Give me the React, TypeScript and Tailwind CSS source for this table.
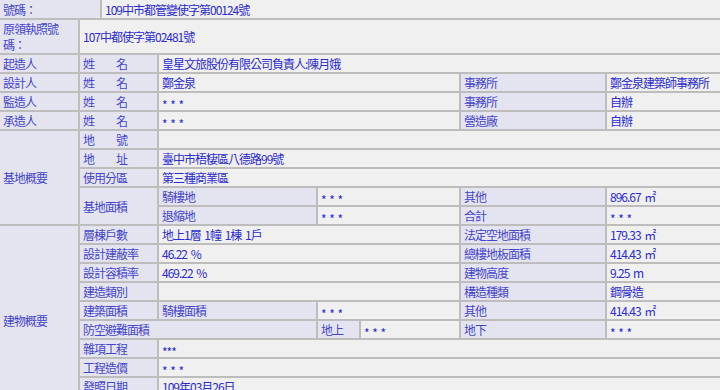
import React from "react";

type CellProps = {
  kind?: "l" | "v";
  className?: string;
  children?: React.ReactNode;
};

// label cells are lavender, value cells are grey
function Cell({ kind = "v", className = "", children }: CellProps) {
  const tone =
    kind === "l"
      ? "bg-[#e4e4f0] text-[#4444cc]"
      : "bg-[#f0f0f0] text-[#2b2bd0]";
  return (
    <div className={`flex items-center px-[3px] whitespace-nowrap ${tone} ${className}`}>
      <div>{children}</div>
    </div>
  );
}

const Stars = () => <span className="relative top-[3px]">* * *</span>;

export default function App() {
  return (
    <div className="w-[720px] h-[390px] overflow-hidden bg-white font-['Noto_Sans_CJK_TC',sans-serif] text-[12px] tracking-[-1px] [word-spacing:2px] leading-[15px]">
      <div className="flex flex-col gap-[2px] bg-[#bdbdbd]">
        {/* 號碼 */}
        <div className="grid grid-cols-[100px_1fr] gap-[2px] h-[18px]">
          <Cell kind="l">號碼：</Cell>
          <Cell>109中市都管變使字第00124號</Cell>
        </div>

        {/* 原領執照號碼 */}
        <div className="grid grid-cols-[78px_1fr] gap-[2px] h-[33px]">
          <Cell kind="l" className="leading-[16px]">
            原領執照號
            <br />
            碼：
          </Cell>
          <Cell>107中都使字第02481號</Cell>
        </div>

        {/* main table */}
        <div className="grid grid-cols-[78px_77px_157px_41px_98px_144px_1fr] auto-rows-[17px] gap-[2px]">
          <Cell kind="l">起造人</Cell>
          <Cell kind="l">姓　　名</Cell>
          <Cell className="col-span-5">皇星文旅股份有限公司負責人:陳月娥</Cell>

          <Cell kind="l">設計人</Cell>
          <Cell kind="l">姓　　名</Cell>
          <Cell className="col-span-3">鄭金泉</Cell>
          <Cell kind="l">事務所</Cell>
          <Cell>鄭金泉建築師事務所</Cell>

          <Cell kind="l">監造人</Cell>
          <Cell kind="l">姓　　名</Cell>
          <Cell className="col-span-3"><Stars /></Cell>
          <Cell kind="l">事務所</Cell>
          <Cell>自辦</Cell>

          <Cell kind="l">承造人</Cell>
          <Cell kind="l">姓　　名</Cell>
          <Cell className="col-span-3"><Stars /></Cell>
          <Cell kind="l">營造廠</Cell>
          <Cell>自辦</Cell>

          {/* 基地概要 */}
          <Cell kind="l" className="row-span-5">基地概要</Cell>
          <Cell kind="l">地　　號</Cell>
          <Cell className="col-span-5" />

          <Cell kind="l">地　　址</Cell>
          <Cell className="col-span-5">臺中市梧棲區八德路99號</Cell>

          <Cell kind="l">使用分區</Cell>
          <Cell className="col-span-5">第三種商業區</Cell>

          <Cell kind="l" className="row-span-2">基地面積</Cell>
          <Cell kind="l">騎樓地</Cell>
          <Cell className="col-span-2"><Stars /></Cell>
          <Cell kind="l">其他</Cell>
          <Cell>896.67 ㎡</Cell>

          <Cell kind="l">退縮地</Cell>
          <Cell className="col-span-2"><Stars /></Cell>
          <Cell kind="l">合計</Cell>
          <Cell><Stars /></Cell>

          {/* 建物概要 */}
          <Cell kind="l" className="row-span-10">建物概要</Cell>
          <Cell kind="l">層棟戶數</Cell>
          <Cell className="col-span-3">地上1層 1幢 1棟 1戶</Cell>
          <Cell kind="l">法定空地面積</Cell>
          <Cell>179.33 ㎡</Cell>

          <Cell kind="l">設計建蔽率</Cell>
          <Cell className="col-span-3">46.22 %</Cell>
          <Cell kind="l">總樓地板面積</Cell>
          <Cell>414.43 ㎡</Cell>

          <Cell kind="l">設計容積率</Cell>
          <Cell className="col-span-3">469.22 %</Cell>
          <Cell kind="l">建物高度</Cell>
          <Cell>9.25 m</Cell>

          <Cell kind="l">建造類別</Cell>
          <Cell className="col-span-3" />
          <Cell kind="l">構造種類</Cell>
          <Cell>鋼骨造</Cell>

          <Cell kind="l">建築面積</Cell>
          <Cell kind="l">騎樓面積</Cell>
          <Cell className="col-span-2"><Stars /></Cell>
          <Cell kind="l">其他</Cell>
          <Cell>414.43 ㎡</Cell>

          <Cell kind="l" className="col-span-2">防空避難面積</Cell>
          <Cell kind="l">地上</Cell>
          <Cell><Stars /></Cell>
          <Cell kind="l">地下</Cell>
          <Cell><Stars /></Cell>

          <Cell kind="l">雜項工程</Cell>
          <Cell className="col-span-5"><span className="relative top-[3px]">***</span></Cell>

          <Cell kind="l">工程造價</Cell>
          <Cell className="col-span-5"><Stars /></Cell>

          <Cell kind="l">發照日期</Cell>
          <Cell className="col-span-5">109年03月26日</Cell>

          <Cell kind="l">開工期限</Cell>
          <Cell className="col-span-5">109年09月26日</Cell>
        </div>
      </div>
    </div>
  );
}
